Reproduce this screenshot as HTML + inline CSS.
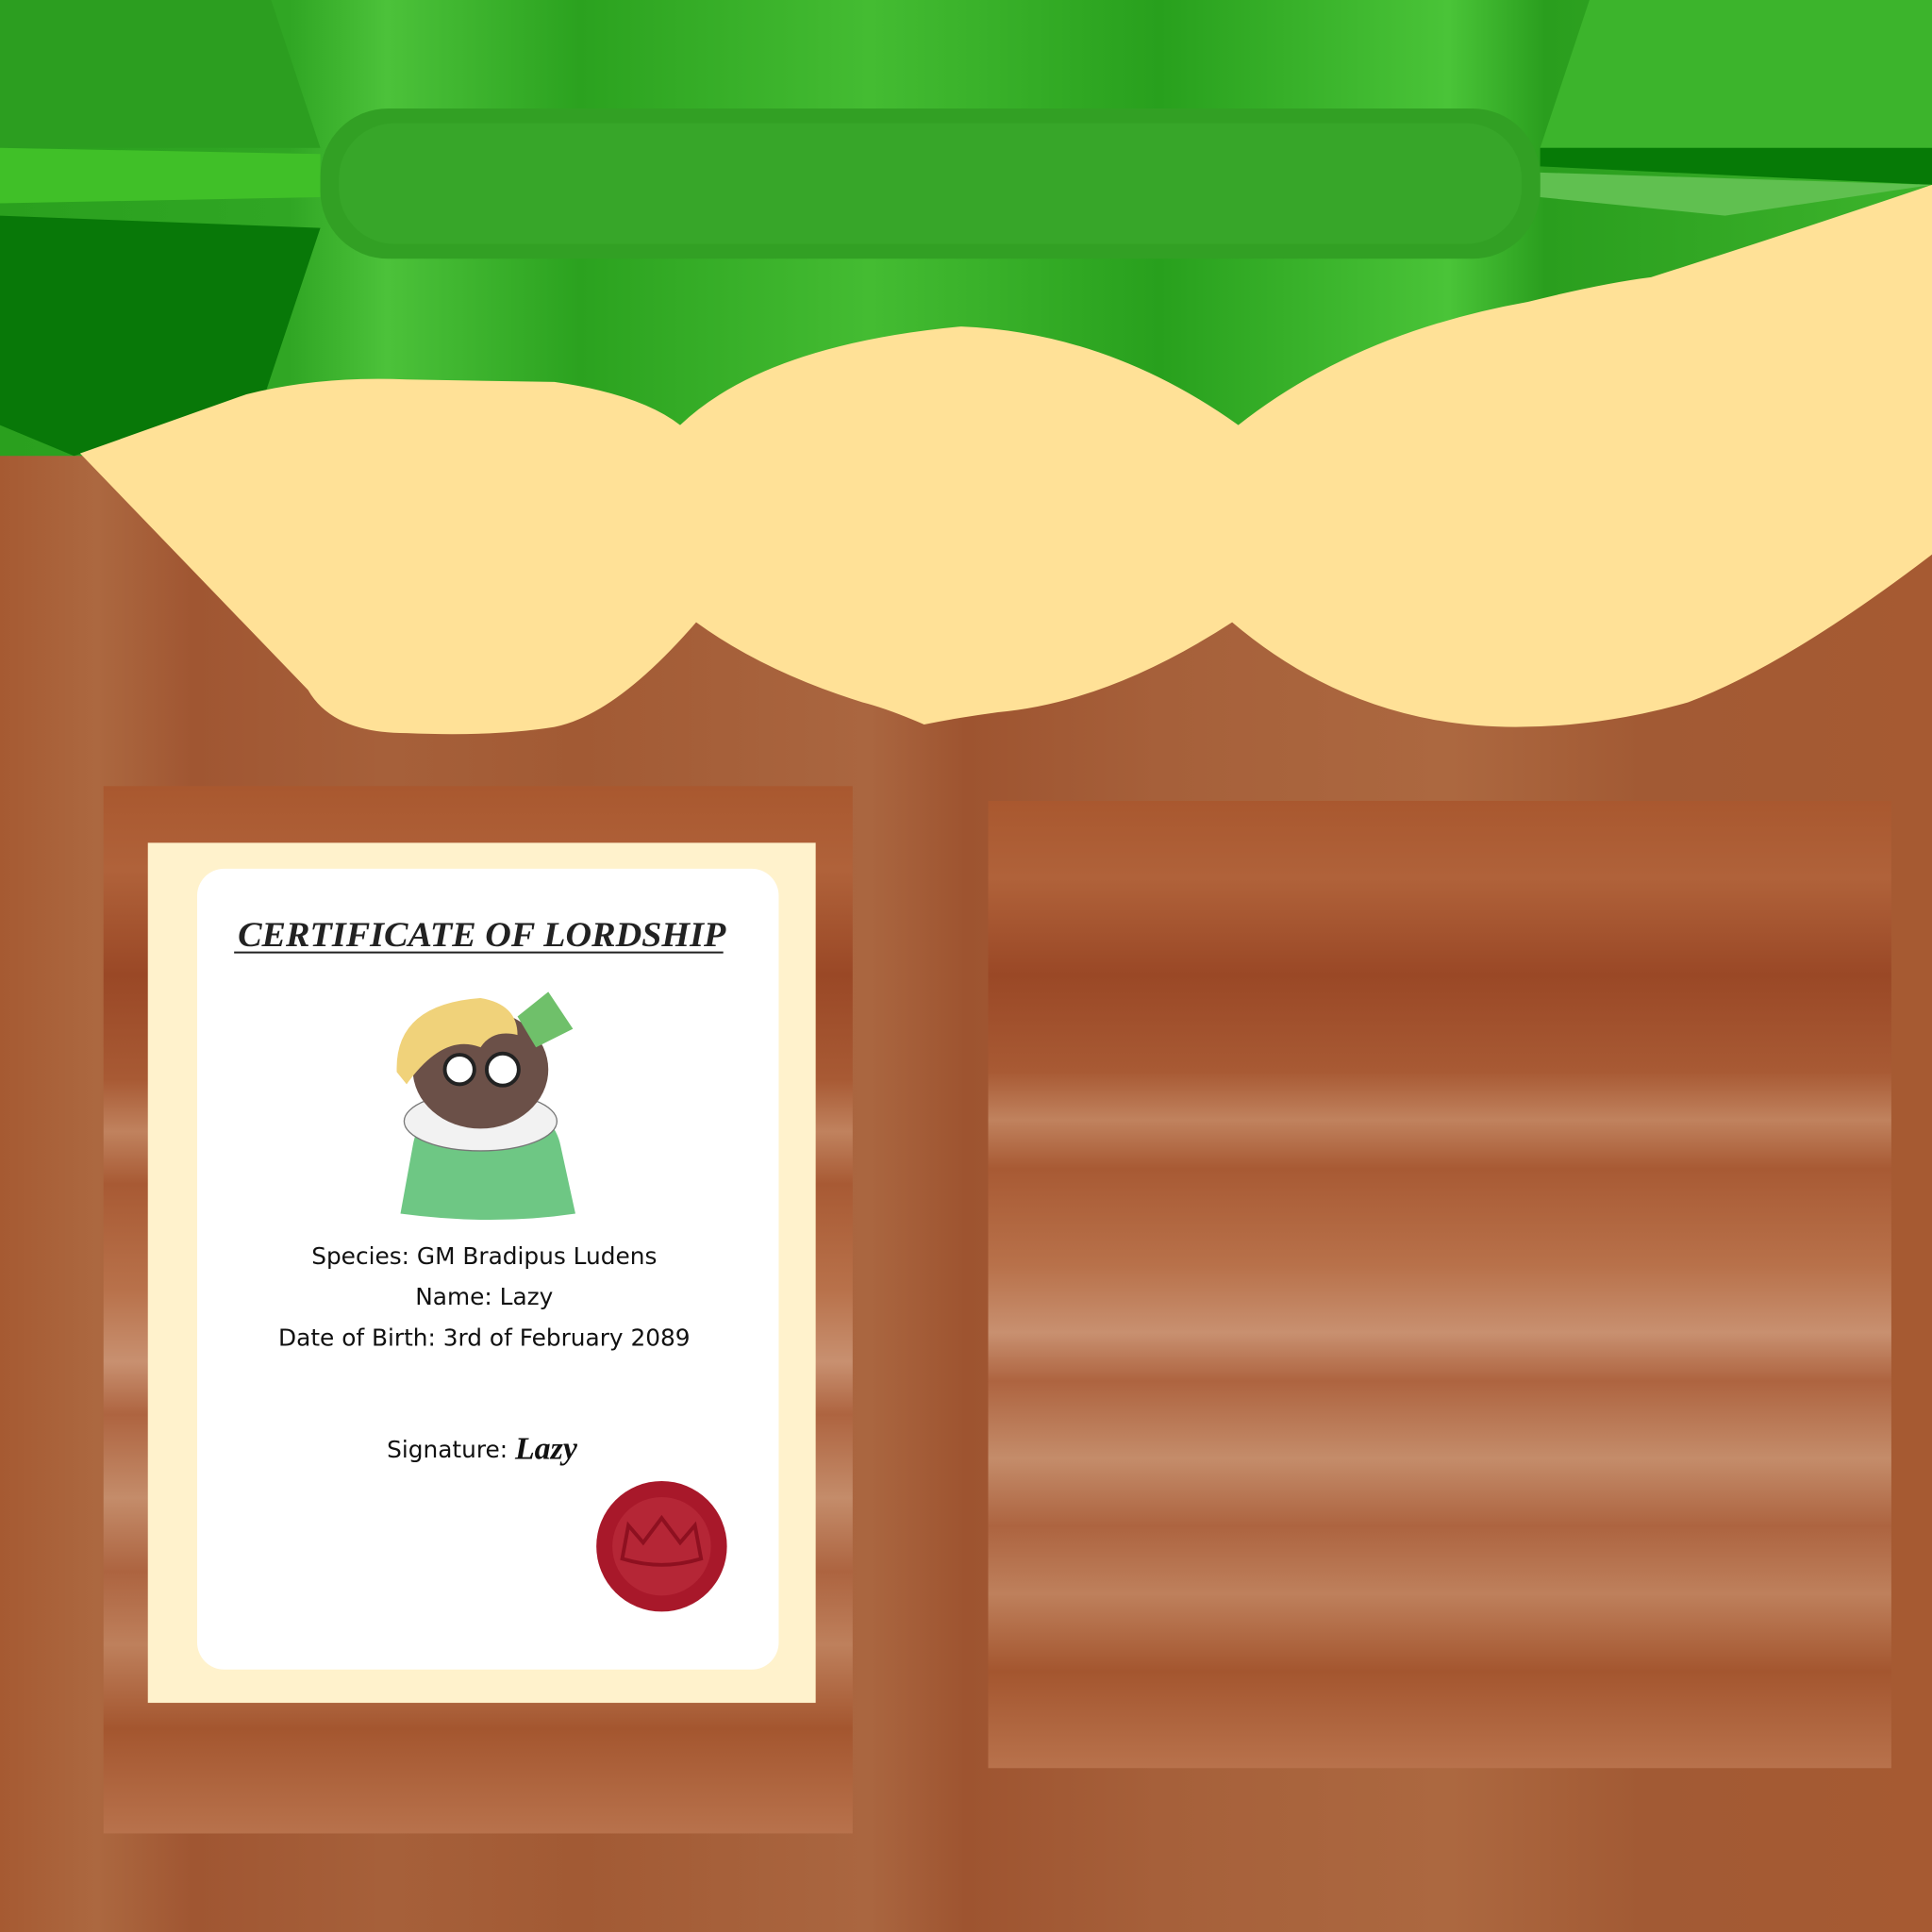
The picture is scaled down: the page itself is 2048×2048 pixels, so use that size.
<!DOCTYPE html>
<html><head><meta charset="utf-8"><style>
html,body{margin:0;padding:0;background:#a65a32}
svg{display:block}
</style></head><body>
<svg width="2048" height="2048" viewBox="0 0 1568 1568" xmlns="http://www.w3.org/2000/svg">
<defs>
<linearGradient id="vw" x1="0" y1="0" x2="1" y2="0">
<stop offset="0" stop-color="#a65a32"/><stop offset="0.05" stop-color="#ac6840"/><stop offset="0.1" stop-color="#a05632"/><stop offset="0.2" stop-color="#a6603a"/><stop offset="0.3" stop-color="#a25a34"/><stop offset="0.45" stop-color="#aa6640"/><stop offset="0.5" stop-color="#9e5430"/><stop offset="0.6" stop-color="#a6603a"/><stop offset="0.75" stop-color="#ac6840"/><stop offset="0.85" stop-color="#a25a34"/><stop offset="1" stop-color="#a65a32"/>
</linearGradient>
<linearGradient id="hw" x1="0" y1="0" x2="0" y2="1">
<stop offset="0" stop-color="#a9582f"/><stop offset="0.08" stop-color="#b0623a"/><stop offset="0.18" stop-color="#9a4826"/><stop offset="0.28" stop-color="#a85a34"/><stop offset="0.33" stop-color="#c0825e"/><stop offset="0.38" stop-color="#a85a34"/><stop offset="0.48" stop-color="#b8714a"/><stop offset="0.55" stop-color="#c89070"/><stop offset="0.6" stop-color="#ae6440"/><stop offset="0.68" stop-color="#c48c6a"/><stop offset="0.75" stop-color="#ad6440"/><stop offset="0.82" stop-color="#be805c"/><stop offset="0.9" stop-color="#a4562f"/><stop offset="1" stop-color="#b8724c"/>
</linearGradient>
<linearGradient id="gr" x1="0" y1="0" x2="1" y2="0">
<stop offset="0" stop-color="#2aa01e"/><stop offset="0.15" stop-color="#30a624"/><stop offset="0.2" stop-color="#4cc23a"/><stop offset="0.3" stop-color="#2ba21f"/><stop offset="0.45" stop-color="#44bc32"/><stop offset="0.6" stop-color="#28a01d"/><stop offset="0.75" stop-color="#4ac438"/><stop offset="0.8" stop-color="#2a9e1e"/><stop offset="1" stop-color="#3db42c"/>
</linearGradient>
</defs>
<rect width="1568" height="1568" fill="url(#vw)"/>
<rect x="0" y="0" width="1568" height="370" fill="url(#gr)"/>
<polygon points="0,175 260,185 215,320 60,370 0,345" fill="#087808"/>
<polygon points="0,0 220,0 260,120 0,120" fill="#2c9e20"/>
<polygon points="0,120 260,125 260,160 0,165" fill="#40c028"/>
<polygon points="1290,0 1568,0 1568,120 1250,120" fill="#3cb42c"/>
<polygon points="1250,120 1568,120 1568,150 1250,135" fill="#067a06"/>
<polygon points="1250,140 1568,150 1400,175 1250,160" fill="#60c050"/>
<rect x="260" y="88" width="990" height="122" rx="55" fill="#32a024"/>
<rect x="275" y="100" width="960" height="98" rx="45" fill="#38a82a" opacity="0.8"/>
<path d="M65,368 L200,320 Q260,305 330,308 L450,310 Q520,320 552,345 Q620,280 780,265 Q900,270 1005,345 Q1100,270 1240,245 Q1300,230 1340,225 Q1450,190 1568,150 L1568,450 Q1450,540 1370,570 Q1300,590 1230,590 Q1100,590 1000,505 Q900,570 810,578 Q780,582 750,588 Q720,575 700,570 Q620,545 565,505 Q500,580 450,590 Q400,598 330,595 Q270,595 250,560 Z" fill="#ffe197"/>
<rect x="84" y="638" width="608" height="850" fill="url(#hw)"/>
<rect x="802" y="650" width="733" height="785" fill="url(#hw)"/>
<rect x="120" y="684" width="542" height="698" fill="#fff2cc"/>
<rect x="160" y="705" width="472" height="650" rx="22" fill="#fff"/>
<text x="391" y="768" text-anchor="middle" font-family="Liberation Serif, serif" font-style="italic" font-weight="bold" font-size="28" fill="#222" textLength="396" lengthAdjust="spacingAndGlyphs">CERTIFICATE OF LORDSHIP</text>
<line x1="190" y1="773" x2="587" y2="773" stroke="#222" stroke-width="1.5"/>
<path d="M325,985 L335,930 Q340,900 370,895 L420,895 Q450,905 455,930 L467,985 Q400,995 325,985 Z" fill="#6ec784"/>
<ellipse cx="390" cy="910" rx="62" ry="24" fill="#f2f2f2" stroke="#777" stroke-width="1"/>
<ellipse cx="390" cy="868" rx="55" ry="48" fill="#6b5048"/>
<path d="M322,870 Q320,815 390,810 Q420,815 420,840 Q400,835 390,850 Q360,838 330,880 Z" fill="#f0d27a"/>
<circle cx="373" cy="868" r="12" fill="#fff" stroke="#222" stroke-width="3"/>
<circle cx="408" cy="868" r="13" fill="#fff" stroke="#222" stroke-width="3"/>
<path d="M420,825 L445,805 L465,835 L435,850 Z" fill="#6fc06a"/>
<g font-family="DejaVu Sans, Liberation Sans, sans-serif" font-size="19" fill="#111" text-anchor="middle">
<text x="393" y="1026">Species: GM Bradipus Ludens</text>
<text x="393" y="1059">Name: Lazy</text>
<text x="393" y="1092">Date of Birth: 3rd of February 2089</text>
<text x="363" y="1183">Signature:</text>
</g>
<text x="418" y="1184" font-family="Liberation Serif, serif" font-style="italic" font-weight="bold" font-size="26" fill="#111">Lazy</text>
<circle cx="537" cy="1255" r="53" fill="#a8182a"/>
<circle cx="537" cy="1255" r="40" fill="#b52636"/>
<path d="M505,1265 L510,1238 L522,1252 L537,1232 L552,1252 L564,1238 L569,1265 Q537,1275 505,1265 Z" fill="none" stroke="#8e1020" stroke-width="3"/>
</svg>
</body></html>
